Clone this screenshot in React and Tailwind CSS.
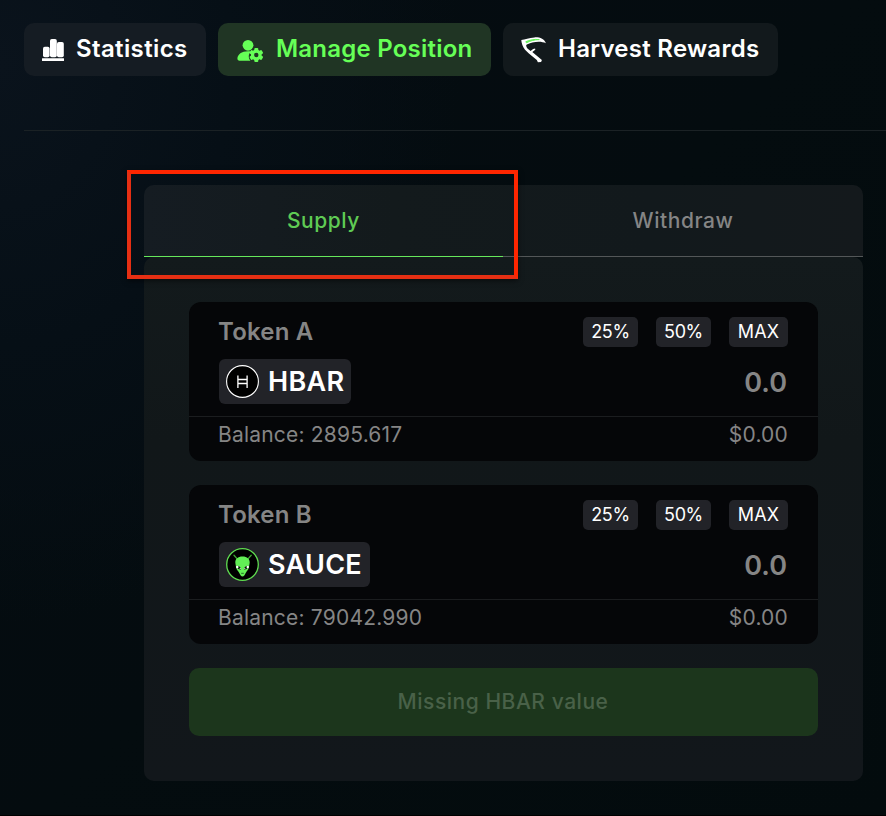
function StatsIcon() {
  return (
    <svg width="24" height="26" viewBox="0 0 24 26" fill="#fff" className="shrink-0">
      <rect x="1" y="9.8" width="6.6" height="10.4" rx="1.8" />
      <rect x="8" y="2" width="6.8" height="18.2" rx="1.8" />
      <rect x="15" y="5" width="6.8" height="15.2" rx="1.8" />
      <rect x="0" y="21.2" width="22" height="2.9" rx="0.4" />
    </svg>
  );
}

function ManageIcon() {
  const teeth = [0, 60, 120, 180, 240, 300];
  return (
    <svg width="28" height="26" viewBox="0 0 28 26" fill="#66ff57" className="shrink-0">
      <circle cx="11" cy="8.3" r="5.4" />
      <path d="M11 14.2C4.6 14.2.6 17.4.4 21.6c0 1.3.8 2.1 2 2.1h11c-2.4-3.1-2.1-6.6.6-9.2-.9-.2-1.900-.3-3-.3z" />
      <circle cx="19.300" cy="18" r="3.800" fill="none" stroke="#66ff57" strokeWidth="3.200" />
      {teeth.map((a) => (
        <rect key={a} x="17.300" y="11" width="4" height="3.600" rx="1" transform={`rotate(${a} 19.300 18)`} />
      ))}
    </svg>
  );
}

function ScytheIcon() {
  return (
    <svg width="26" height="26" viewBox="0 0 26 26" className="shrink-0">
      <path d="M.3 3C4 2.300 8 .8 13.500.4c5.500-.3 9.800 1.700 11.400 5.900-3.500-1.800-8.500-2-13.500-.7-3.600 1-5.800 1.800-6.300 2.900.2 1.500 1.200 3 2.600 4.100l1.900 1.300 2.500-2 2-.4.200 1.200-3 2.300 9.600 7.900-.8 2.200-3.200.1-1.100-2.100-7.900-6.700L4 12.800C1.900 9.800.3 6 .3 3z" fill="#fff" />
      <path d="M4.800 4.700C9 3 13 1.900 18.300 2.600c-4.800 0-9.300 1.300-12.800 3.200z" fill="#66f25a" stroke="#66f25a" strokeWidth="1" />
    </svg>
  );
}

function HbarIcon() {
  return (
    <svg width="33" height="33" viewBox="0 0 33 33" fill="none" className="shrink-0">
      <circle cx="16.5" cy="16.500" r="15.900" fill="#000" stroke="#fff" strokeWidth="1.1" />
      <path d="M11.900 10.500v12.500M21.100 10.500v12.500M11.900 14.500h9.200M11.900 18.500h9.200" stroke="#fff" strokeWidth="1.3" />
    </svg>
  );
}

function SauceIcon() {
  return (
    <svg width="33" height="33" viewBox="0 0 33 33" fill="none" className="shrink-0">
      <circle cx="16.500" cy="16.500" r="15.800" fill="#000" stroke="#5fdc50" strokeWidth="1.300" />
      <path d="M8 7.300l3.200 3.600M25.200 7.300L22 10.900" stroke="#3fa534" strokeWidth="1.300" strokeLinecap="round" />
      <path d="M16.500 8.500c4.700 0 7.200 2.500 7.200 6 0 1-.4 1.900-.5 3 .2 3.300-2.200 5.400-3.500 7.400-.8 1.800-1.800 3.600-3.200 3.600s-2.400-1.800-3.200-3.600c-1.300-2-3.700-4.100-3.500-7.400-.1-1.100-.5-2-.5-3 0-3.500 2.500-6 7.200-6z" fill="#62ef55" />
      <path d="M10.800 17.800c2.500 0 4 1.400 4.300 3.700-2.300.3-4.300-1.200-4.300-3.700zM22.200 17.800c-2.500 0-4 1.400-4.300 3.700 2.300.3 4.300-1.200 4.300-3.700z" fill="#061006" />
      <circle cx="11.300" cy="19" r="1.200" fill="#fff" />
      <circle cx="21.700" cy="19" r="1.200" fill="#fff" />
      <circle cx="14.200" cy="20.600" r=".6" fill="#fff" />
      <circle cx="18.800" cy="20.600" r=".6" fill="#fff" />
      <path d="M15.200 25.300h2.600" stroke="#14501a" strokeWidth=".8" />
    </svg>
  );
}

function Chip({ children, className }) {
  return (
    <button className={`flex h-[30px] items-center justify-center rounded-[5px] bg-[#222328] text-[18px] leading-none text-white ${className}`}>
      {children}
    </button>
  );
}

function TokenCard({ label, symbol, icon, balance, chipWidth }) {
  return (
    <div className="flex h-[159px] flex-col rounded-[12px] bg-[#050608] text-[#858585]">
      <div className="flex h-[114px] flex-col px-[30px] pt-[15px]">
        <div className="flex h-[30px] items-center justify-between">
          <span className="-ml-px text-[24px] leading-[30px] font-semibold tracking-[0.2px]">{label}</span>
          <div className="flex gap-[18px]">
            <Chip className="w-[55px] tracking-[-0.4px]">25%</Chip>
            <Chip className="w-[55px] tracking-[-0.4px]">50%</Chip>
            <Chip className="w-[59px] tracking-[0.1px]">MAX</Chip>
          </div>
        </div>
        <div className="mt-3 flex h-[45px] items-center justify-between">
          <div className={`flex h-[45px] items-center gap-[9px] rounded-[6px] bg-[#222328] pl-[7px] ${chipWidth}`}>
            {icon}
            <span className="text-[27px] leading-[45px] font-semibold tracking-[0.3px] text-white">{symbol}</span>
          </div>
          <span className="pt-[2px] pr-px text-[27px] leading-none font-semibold">0.0</span>
        </div>
      </div>
      <div className="flex h-[37px] items-center justify-between border-t border-[#1b1d1f] px-[30px] pb-[2px] text-[21px] leading-none tracking-[0.2px]">
        <span className="-ml-px">Balance: {balance}</span>
        <span>$0.00</span>
      </div>
    </div>
  );
}

export default function App() {
  return (
    <div className="relative h-[816px] w-[886px] overflow-hidden border-b border-black bg-[radial-gradient(ellipse_460px_560px_at_0%_8%,#0a131c_0%,#060f16_50%,transparent_100%),linear-gradient(135deg,#050c12,#040c0f_50%,#030b0d)] font-[Inter,'Liberation_Sans',sans-serif]">
      <nav className="flex gap-3 pt-[23px] pl-6 text-[24px] leading-none font-semibold text-white">
        <button className="flex h-[53px] w-[182px] items-center gap-[10px] rounded-[10px] bg-[#151c23] pl-[18px]">
          <StatsIcon />
          <span className="pb-[2px] tracking-[0.37px] whitespace-nowrap">Statistics</span>
        </button>
        <button className="flex h-[53px] w-[273px] items-center gap-[11px] rounded-[10px] bg-[#203524] pl-[19px] text-[#66ff57]">
          <ManageIcon />
          <span className="pb-[2px] tracking-[0.22px] whitespace-nowrap">Manage Position</span>
        </button>
        <button className="flex h-[53px] w-[275px] items-center gap-[11px] rounded-[10px] bg-[#12191c] pl-[18px]">
          <ScytheIcon />
          <span className="pb-[2px] tracking-[0.27px] whitespace-nowrap">Harvest Rewards</span>
        </button>
      </nav>
      <hr className="mt-[54px] ml-6 border-t border-[#1b2225]" />
      <main className="mt-[54px] ml-[144px] w-[719px]">
        <div className="flex h-[72px] overflow-hidden rounded-t-[10px] bg-[linear-gradient(90deg,#151c22,#131a1c_35%,#12191c_70%,#14191c)] text-[21px] font-medium tracking-[0.55px]">
          <button className="w-[359px] border-b border-[#66e85b] text-[#5fcb54]">Supply</button>
          <button className="flex-1 border-b border-[#535758] text-[#858585]">Withdraw</button>
        </div>
        <section className="flex h-[524px] flex-col gap-6 rounded-[10px] bg-[linear-gradient(180deg,#131a1c,#111719_35%,#12171b)] px-[45px] pt-[45px]">
          <TokenCard label="Token A" symbol="HBAR" icon={<HbarIcon />} balance="2895.617" chipWidth="w-[132px]" />
          <TokenCard label="Token B" symbol="SAUCE" icon={<SauceIcon />} balance="79042.990" chipWidth="w-[151px]" />
          <button className="h-[68px] rounded-[10px] bg-[#1c361c] pr-px text-[21px] font-medium tracking-[0.54px] text-[#496148]">
            Missing HBAR value
          </button>
        </section>
      </main>
      <div className="pointer-events-none absolute top-[170px] left-[127px] h-[109px] w-[391px] border-4 border-t-[#ff2600] border-r-[#ff2600] border-b-[#e62f13] border-l-[#e62f13] shadow-[0_2px_5px_rgba(0,0,0,0.5)]" />
    </div>
  );
}
